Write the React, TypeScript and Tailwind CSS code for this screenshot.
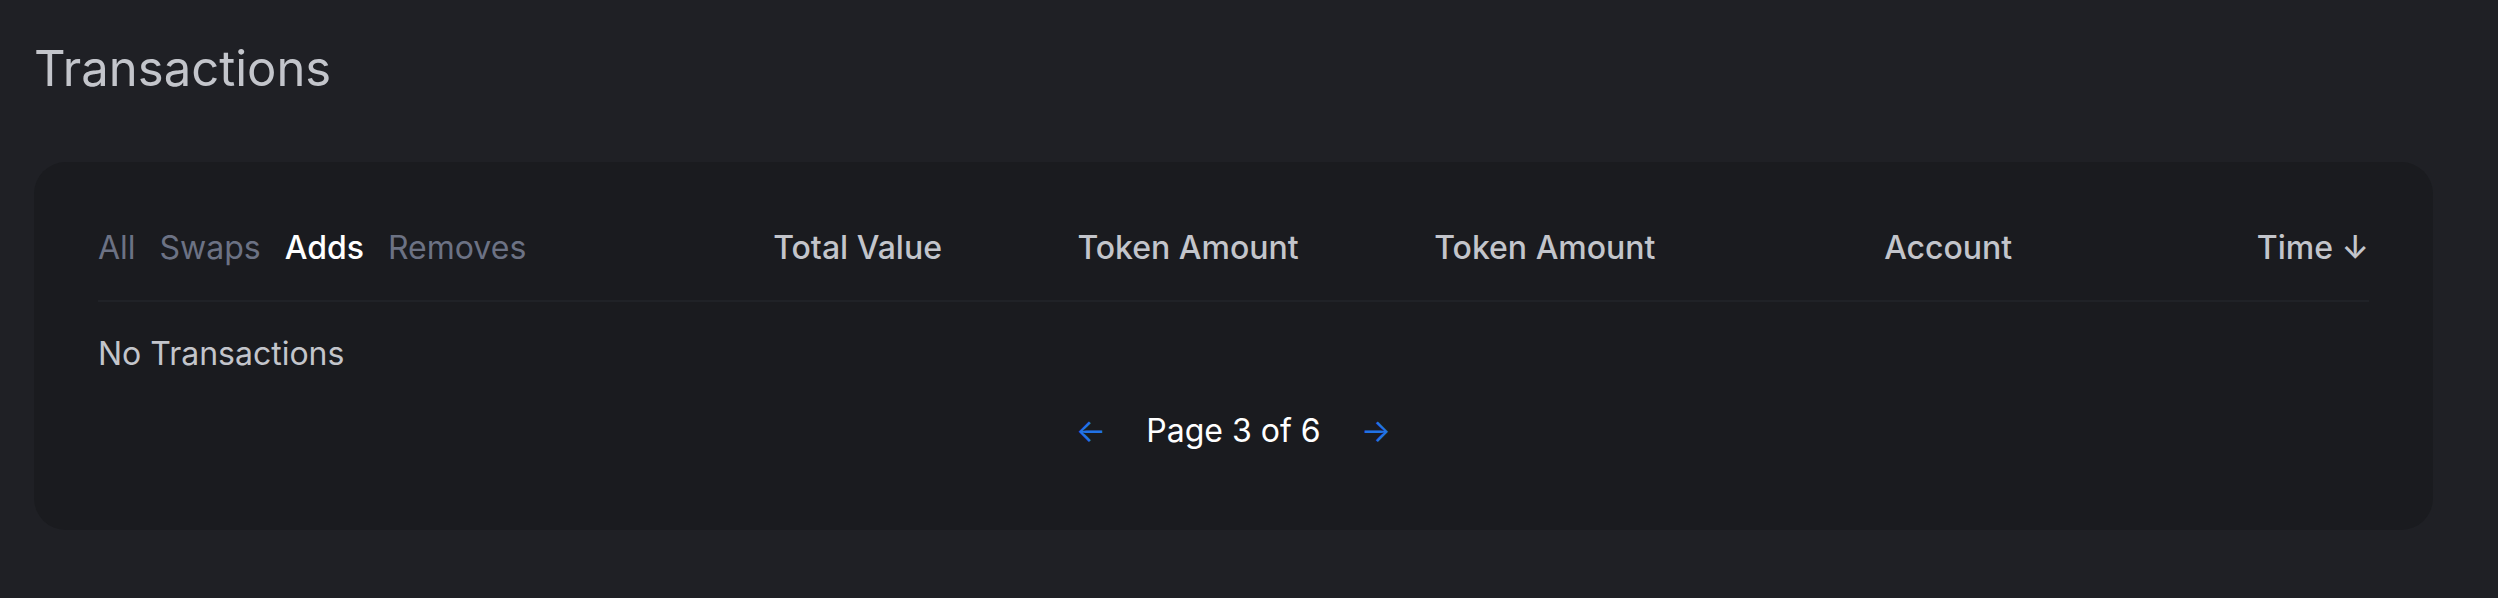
const tabs = ['All', 'Swaps', 'Adds', 'Removes'];
const columns = ['Total Value', 'Token Amount', 'Token Amount', 'Account', 'Time ↓'];

const TransactionTable = () => {
  const active = 'Adds';

  return (
    <div className="rounded-[32px] bg-[#1a1b1f] px-[64px] pt-[66px] pb-[63px] flex flex-col gap-[32px]">
      {/* Header */}
      <div className="grid grid-cols-[1.5fr_repeat(5,1fr)] gap-x-[32px] items-center">
        <div className="flex items-center">
          {tabs.map((tab) => (
            <button
              key={tab}
              className={
                tab === active
                  ? 'mr-[24px] text-[32px] leading-[40px] font-medium text-white'
                  : 'mr-[24px] text-[32px] leading-[40px] font-normal text-[#6c7284]'
              }
            >
              {tab}
            </button>
          ))}
        </div>
        {columns.map((col, i) => (
          <div key={i} className="text-right text-[32px] leading-[40px] font-medium text-[#c3c5cb]">
            {col}
          </div>
        ))}
      </div>

      <div className="h-[2px] bg-[#202227]" />

      <div className="text-[32px] leading-[40px] text-[#c3c5cb]">No Transactions</div>

      {/* Pagination */}
      <div className="flex items-center justify-center mt-[5px] mb-[16px]">
        <span className="px-[40px] text-[32px] leading-[40px] text-[#2172e5]">←</span>
        <span className="text-[32px] leading-[40px] text-white">Page 3 of 6</span>
        <span className="px-[40px] text-[32px] leading-[40px] text-[#2172e5]">→</span>
      </div>
    </div>
  );
};

export default function App() {
  return (
    <div
      className="min-h-screen bg-[#1f2025] pl-[34px] pr-[65px] pt-[40px]"
      style={{ fontFamily: 'Inter, "Noto Sans", sans-serif' }}
    >
      <h1 className="text-[49px] leading-[58px] font-normal text-[#c3c5cb] mb-[64px]">Transactions</h1>
      <TransactionTable />
    </div>
  );
}
